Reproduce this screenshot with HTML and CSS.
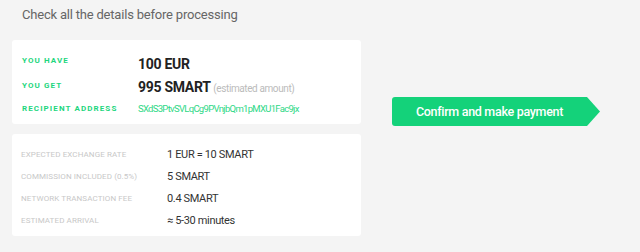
FILE: index.html
```html
<!DOCTYPE html>
<html>
<head>
  <title>Check details</title>
  <link rel="stylesheet" href="styles.css">
</head>
<body>
<div class="page">
  <div class="left">
    <h1 class="title">Check all the details before processing</h1>

    <div class="card main-card">
      <div class="row">
        <span class="label label-green lift">You have</span>
        <span class="value big">100 EUR</span>
      </div>
      <div class="row">
        <span class="label label-green lift-small">You get</span>
        <span class="value big">995 SMART <span class="note">(estimated amount)</span></span>
      </div>
      <div class="row">
        <span class="label label-green">Recipient address</span>
        <span class="value address">SXdS3PtvSVLqCg9PVnjbQm1pMXU1Fac9jx</span>
      </div>
    </div>

    <div class="card info-card">
      <div class="info-row">
        <span class="label label-grey">Expected exchange rate</span>
        <span class="value small">1 EUR = 10 SMART</span>
      </div>
      <div class="info-row">
        <span class="label label-grey">Commission included (0.5%)</span>
        <span class="value small">5 SMART</span>
      </div>
      <div class="info-row">
        <span class="label label-grey">Network transaction fee</span>
        <span class="value small">0.4 SMART</span>
      </div>
      <div class="info-row">
        <span class="label label-grey">Estimated arrival</span>
        <span class="value small">&asymp; 5-30 minutes</span>
      </div>
    </div>
  </div>

  <div class="right">
    <button class="pay-btn">Confirm and make payment</button>
  </div>
</div>
</body>
</html>
```

FILE: styles.css
```css
body {
    margin: 0;
    background: #f4f4f4;
    font-family: Roboto, "Liberation Sans", Arial, sans-serif;
    color: #333333;
}

.page {
    display: flex;
    padding: 0 12px;
}

.left {
    width: 349px;
}

.title {
    margin: 0 0 15px 0;
    padding: 5px 0 0 10px;
    font-size: 13px;
    line-height: 20px;
    font-weight: 400;
    letter-spacing: -0.2px;
    color: #666666;
}

.card {
    background: #ffffff;
    border-radius: 3px;
}

.main-card {
    padding: 12px 10px 8px 10px;
}

.info-card {
    margin-top: 10px;
    padding: 10px 9px 4px 9px;
}

.row {
    display: flex;
    align-items: center;
    height: 24px;
}

.row:last-child {
    height: 14px;
    margin-top: 2px;
}

.info-row {
    display: flex;
    align-items: center;
    height: 22px;
}

.label {
    flex: none;
    text-transform: uppercase;
    line-height: 10px;
}

.label-green {
    width: 116px;
    font-size: 8px;
    letter-spacing: 1.1px;
    color: #1ed67e;
    font-weight: 700;
}

.lift {
    margin-bottom: 7px;
}

.lift-small {
    margin-bottom: 5px;
}

.label-grey {
    width: 146px;
    color: #c8c8c8;
    font-size: 8px;
    letter-spacing: 0.1px;
}

.value.big {
    font-size: 14px;
    line-height: 18px;
    font-weight: 700;
    letter-spacing: -0.3px;
    color: #222222;
}

.note {
    font-size: 10px;
    font-weight: 400;
    letter-spacing: -0.4px;
    color: #bbbbbb;
}

.address {
    font-size: 9.5px;
    line-height: 14px;
    letter-spacing: -0.7px;
    color: #2ed886;
}

.value.small {
    font-size: 11px;
    line-height: 16px;
    letter-spacing: -0.35px;
    color: #333333;
}

.right {
    margin-left: 31px;
    padding-top: 97px;
}

.pay-btn {
    display: block;
    width: 208px;
    height: 29px;
    padding: 0 13px 0 0;
    border: 0;
    border-radius: 3px;
    background: #14d27a;
    color: #ffffff;
    font-family: Roboto, "Liberation Sans", Arial, sans-serif;
    font-size: 12.5px;
    font-weight: 500;
    letter-spacing: -0.3px;
    clip-path: polygon(0 0, calc(100% - 13px) 0, 100% 50%, calc(100% - 13px) 100%, 0 100%);
    cursor: pointer;
}
```
